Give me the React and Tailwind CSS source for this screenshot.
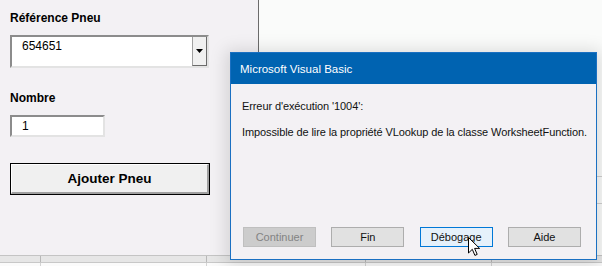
import React from "react";

const sans = { fontFamily: '"Liberation Sans", Arial, sans-serif' };

const DialogButton = ({ children, variant = "normal" }) => {
  const styles = {
    disabled: "bg-[#cccccc] border-[#bfbfbf] text-[#838383]",
    normal: "bg-[#e1e1e1] border-[#adadad] text-[#111]",
    hover: "bg-[#e5f1fb] border-[#0078d7] text-[#111]",
  };
  return (
    <div className={`w-[73px] h-[20px] border flex items-center justify-center text-[11px] leading-[14px] ${styles[variant]}`}>
      {children}
    </div>
  );
};

const Cursor = () => (
  <svg width="13" height="20" viewBox="0 0 13 20" className="absolute left-[468px] top-[237px]">
    <path
      d="M0.5 0.5 L0.5 16 L4.3 12.3 L6.9 18.4 L9.2 17.4 L6.6 11.4 L11.6 11.4 Z"
      fill="#fff"
      stroke="#000"
      strokeWidth="1"
      strokeLinejoin="miter"
    />
  </svg>
);

export default function App() {
  return (
    <div className="relative w-[602px] h-[266px] overflow-hidden bg-[#fafbfa] text-black" style={sans}>
      <div className="flex flex-col h-full">
        <div className="flex h-[255px]">
          {/* UserForm */}
          <div className="w-[259px] h-full border-r border-[#6b6b6b] bg-[#f3f1f4] pl-[10px] pt-[11px] flex flex-col">
            <div className="text-[12px] leading-[14px] font-bold">Référence Pneu</div>

            <div className="mt-[10px] w-[199px] h-[33px] flex bg-white border-2 border-t-[#8c8c8c] border-l-[#8c8c8c] border-b-[#e3e3e3] border-r-[#e3e3e3]">
              <div className="flex-1 pl-[10px] pt-[2px] text-[12px] leading-[14px]">654651</div>
              <div className="w-[15px] h-full bg-[#f0f0f0] border-l border-l-[#a0a0a0] border-r border-r-[#6b6b6b] border-b border-b-[#6b6b6b] flex items-center justify-center">
                <svg width="7" height="4" viewBox="0 0 7 4">
                  <path d="M0 0 H7 L3.5 4 Z" fill="#000" />
                </svg>
              </div>
            </div>

            <div className="mt-[23px] text-[12px] leading-[14px] font-bold">Nombre</div>

            <div className="mt-[10px] w-[95px] h-[22px] bg-white border-2 border-t-[#8c8c8c] border-l-[#8c8c8c] border-b-[#e3e3e3] border-r-[#e3e3e3] flex items-center pl-[10px] text-[12px] leading-[14px]">
              1
            </div>

            <div className="mt-[26px] w-[200px] h-[32px] border border-black">
              <div className="h-full bg-[#f0f0f0] border-t border-l border-t-white border-l-white border-b-2 border-r-2 border-b-[#a0a0a0] border-r-[#a0a0a0] flex items-center justify-center text-[13.5px] leading-[16px] font-bold">
                Ajouter Pneu
              </div>
            </div>
          </div>

          {/* worksheet */}
          <div className="flex-1 flex flex-col pt-[176px]">
            <div className="h-[27px] border-t border-[#cfcfcf]" />
            <div className="border-t border-[#cfcfcf]" />
          </div>
        </div>

        {/* grid rows */}
        <div className="flex h-[7px] border-t border-[#c4c4c4] bg-[#e6e6e6]">
          <div className="w-[41px] border-r border-[#b8b8b8]" />
          <div className="w-[166px] border-r border-[#b8b8b8]" />
          <div className="w-[159px] border-r border-[#b8b8b8]" />
          <div className="w-[126px] border-r border-[#b8b8b8]" />
          <div className="flex-1" />
        </div>
        <div className="flex flex-1 border-t border-[#c8c8c8] bg-[#fbfbfb]">
          <div className="w-[41px] border-r border-[#d4d4d4]" />
          <div className="w-[166px] border-r border-[#d4d4d4]" />
          <div className="w-[159px] border-r border-[#d4d4d4]" />
          <div className="w-[126px] border-r border-[#d4d4d4]" />
          <div className="flex-1" />
        </div>
      </div>

      {/* Microsoft Visual Basic error dialog */}
      <div className="absolute left-[230px] top-[52px] w-[367px] h-[208px] border border-[#1a70c2] bg-[#f3f1f4] flex flex-col shadow-[0_2px_16px_4px_rgba(0,0,0,0.13)]">
        <div className="h-[31px] bg-[#0063b1] flex items-center pl-[9px] text-white text-[11.5px] leading-[14px]">
          Microsoft Visual Basic
        </div>
        <div className="flex-1 pl-[11px] pt-[14px] text-[11px] leading-[16px] tracking-[-0.1px] text-[#111]">
          <div>Erreur d'exécution '1004':</div>
          <div className="mt-[10px]">Impossible de lire la propriété VLookup de la classe WorksheetFunction.</div>
        </div>
        <div className="flex justify-between pl-[12px] pr-[15px] pb-[12px]">
          <DialogButton variant="disabled">Continuer</DialogButton>
          <DialogButton>Fin</DialogButton>
          <DialogButton variant="hover">Débogage</DialogButton>
          <DialogButton>Aide</DialogButton>
        </div>
      </div>

      <Cursor />
    </div>
  );
}
